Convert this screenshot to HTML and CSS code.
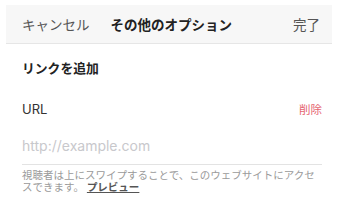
FILE: index.html
```html
<!DOCTYPE html>
<html lang="ja">
<head>
<meta charset="utf-8">
<link rel="stylesheet" href="styles.css">
</head>
<body>
<div class="page">
  <header class="nav">
    <span class="nav-cancel">キャンセル</span>
    <span class="nav-title">その他のオプション</span>
    <span class="nav-done">完了</span>
  </header>
  <main class="content">
    <div class="section-title">リンクを追加</div>
    <div class="url-row">
      <span class="url-label">URL</span>
      <span class="url-delete">削除</span>
    </div>
    <div class="input-row">
      <span class="placeholder">http://example.com</span>
    </div>
    <p class="help">視聴者は上にスワイプすることで、このウェブサイトにアクセスできます。 <span class="help-link">プレビュー</span></p>
  </main>
</div>
</body>
</html>
```

FILE: styles.css
```css
html, body {
  margin: 0;
  padding: 0;
  background: #ffffff;
}
body {
  font-family: "Inter", "Noto Sans CJK JP", sans-serif;
  width: 340px;
  height: 202px;
  overflow: hidden;
}
.page {
  padding-top: 5px;
}
.nav {
  display: flex;
  align-items: center;
  margin: 0 8px 0 6px;
  padding: 2px 12px 0 16px;
  height: 36px;
  background: #f7f7f7;
  border-bottom: 1px solid #e6e6e6;
  font-size: 13.5px;
  line-height: 20px;
}
.nav-cancel {
  color: #555555;
}
.nav-title {
  margin-left: 21px;
  font-weight: 700;
  color: #222222;
}
.nav-done {
  margin-left: auto;
  color: #555555;
}
.content {
  padding: 0 18px 0 22px;
}
.section-title {
  height: 47px;
  display: flex;
  align-items: center;
  font-size: 12.8px;
  font-weight: 700;
  color: #222222;
}
.url-row {
  height: 35px;
  display: flex;
  align-items: center;
  justify-content: space-between;
}
.url-label {
  font-size: 13px;
  color: #333333;
}
.url-delete {
  font-size: 11.5px;
  color: #e5646f;
}
.input-row {
  height: 38px;
  display: flex;
  align-items: center;
  border-bottom: 1px solid #e3e3e3;
}
.placeholder {
  font-size: 14px;
  color: #c8c8cc;
}
.help {
  margin: 4px 0 0 0;
  font-family: "Liberation Sans", "Noto Sans CJK JP", sans-serif;
  font-size: 10.5px;
  line-height: 12px;
  color: #9a9a9a;
}
.help-link {
  color: #555555;
  font-weight: 700;
  text-decoration: underline;
  text-underline-offset: 1px;
}
```
